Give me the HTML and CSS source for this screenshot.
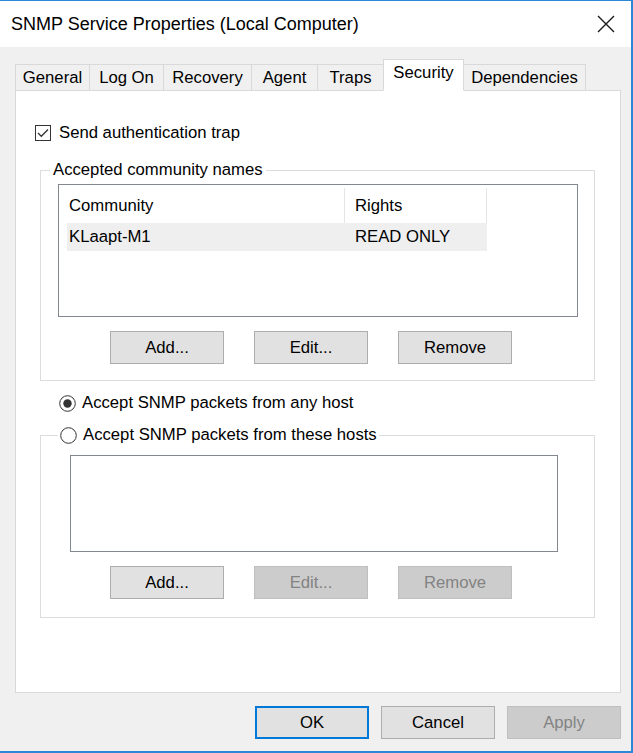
FILE: index.html
```html
<!doctype html>
<html lang="en">
  <head>
    <meta charset="utf-8">
    <title>SNMP Service Properties (Local Computer)</title>
    <link rel="stylesheet" href="styles.css">
  </head>
  <body>
    <div class="window">
      <div class="titlebar">
        <span class="title">SNMP Service Properties (Local Computer)</span>
        <svg class="close" width="18" height="18" viewBox="0 0 18 18">
          <path d="M1 1 L17 17 M17 1 L1 17" stroke="#1a1a1a" stroke-width="1.4" fill="none"/>
        </svg>
      </div>

      <div class="body">
        <div class="tabs">
          <div class="tab">General</div>
          <div class="tab">Log On</div>
          <div class="tab">Recovery</div>
          <div class="tab">Agent</div>
          <div class="tab">Traps</div>
          <div class="tab active">Security</div>
          <div class="tab">Dependencies</div>
        </div>

        <div class="panel">
          <div class="check-row">
            <svg class="checkbox" width="16" height="16" viewBox="0 0 16 16">
              <rect x="0.5" y="0.5" width="15" height="15" fill="#fff" stroke="#333"/>
              <path d="M3 8 L6.3 11.3 L13 4.5" stroke="#333" stroke-width="1.3" fill="none"/>
            </svg>
            <span>Send authentication trap</span>
          </div>

          <fieldset class="group group-community">
            <legend>Accepted community names</legend>
            <div class="listview">
              <div class="lv-head">
                <span class="col-name">Community</span>
                <span class="col-rights">Rights</span>
              </div>
              <div class="lv-row">
                <span class="col-name">KLaapt-M1</span>
                <span class="col-rights">READ ONLY</span>
              </div>
            </div>
            <div class="btn-row">
              <button class="btn">Add...</button>
              <button class="btn">Edit...</button>
              <button class="btn">Remove</button>
            </div>
          </fieldset>

          <div class="radio-row">
            <svg class="radio" width="17" height="17" viewBox="0 0 17 17">
              <circle cx="8.5" cy="8.5" r="7.8" fill="#fff" stroke="#333"/>
              <circle cx="8.5" cy="8.5" r="4.2" fill="#333"/>
            </svg>
            <span>Accept SNMP packets from any host</span>
          </div>

          <fieldset class="group group-hosts">
            <legend>
              <svg class="radio" width="17" height="17" viewBox="0 0 17 17">
                <circle cx="8.5" cy="8.5" r="7.8" fill="#fff" stroke="#333"/>
              </svg>
              <span>Accept SNMP packets from these hosts</span>
            </legend>
            <div class="listbox"></div>
            <div class="btn-row">
              <button class="btn">Add...</button>
              <button class="btn" disabled>Edit...</button>
              <button class="btn" disabled>Remove</button>
            </div>
          </fieldset>
        </div>

        <div class="footer">
          <button class="btn default">OK</button>
          <button class="btn">Cancel</button>
          <button class="btn" disabled>Apply</button>
        </div>
      </div>
    </div>
  </body>
</html>
```

FILE: styles.css
```css
/* base */
body {
    margin: 0;
    font-family: "Liberation Sans", Arial, sans-serif;
    font-size: 16.7px;
    color: #000;
}
/* window frame */
.window {
    box-sizing: border-box;
    width: 633px;
    height: 753px;
    border-top: 1px solid #2b88d8;
    border-right: 2px solid #2b88d8;
    border-bottom: 2px solid #2b88d8;
    background: #f0f0f0;
    display: flex;
    flex-direction: column;
}
.titlebar {
    height: 46px;
    background: #fff;
    display: flex;
    align-items: center;
    padding: 0 16px 0 11px;
}
.title {
    flex: 1;
    font-size: 18px;
}
.close { display: block; }
.body {
    flex: 1;
    padding: 12px 10px 0 15px;
}
/* tabs */
.tabs {
    display: grid;
    grid-template-columns: 74px 74px 88px 66px 66px 80px 122px;
    align-items: end;
    height: 32px;
    margin-bottom: -1px;
    position: relative;
}
.tab {
    box-sizing: border-box;
    height: 27px;
    margin-right: -1px;
    border: 1px solid #d9d9d9;
    background: #f0f0f0;
    display: flex;
    align-items: center;
    justify-content: center;
}
.tab.active {
    height: 32px;
    padding-bottom: 5px;
    background: #fff;
    border-bottom-color: #fff;
    position: relative;
}
.panel {
    box-sizing: border-box;
    height: 603px;
    border: 1px solid #d9d9d9;
    background: #fff;
    padding-top: 32px;
}
/* checkbox / radio rows */
.check-row, .radio-row {
    display: flex;
    align-items: center;
    height: 20px;
    gap: 8px;
}
.check-row { margin-left: 19px; }
.radio-row {
    margin: 12px 0 0 43px;
    gap: 6px;
}
.checkbox, .radio { display: block; flex: none; }
/* group boxes */
.group {
    box-sizing: border-box;
    width: 555px;
    margin: 0 0 0 24px;
    border: 1px solid #dcdcdc;
    min-width: 0;
}
.group legend {
    padding: 0 3px;
    line-height: 20px;
}
.group-community {
    margin-top: 17px;
    padding: 4px 16px 16px 17px;
}
.group-community legend { margin-left: -8px; }
.group-hosts {
    margin-top: 12px;
    padding: 10px 36px 18px 29px;
}
.group-hosts legend {
    margin-left: -12px;
    padding: 0 2px;
    display: flex;
    align-items: center;
    gap: 6px;
}
/* list views */
.listview {
    box-sizing: border-box;
    height: 133px;
    border: 1px solid #828790;
    padding: 3px 0 0 8px;
}
.lv-head, .lv-row {
    display: grid;
    grid-template-columns: 278px 142px;
}
.lv-head {
    height: 35px;
    align-items: center;
}
.lv-head span {
    height: 100%;
    display: flex;
    align-items: center;
    border-right: 1px solid #e5e5e5;
}
.lv-row {
    height: 28px;
    align-items: center;
    background: #efefef;
    width: 420px;
}
.col-name { padding-left: 2px; }
.col-rights { padding-left: 10px; }
.listbox {
    box-sizing: border-box;
    height: 97px;
    border: 1px solid #828790;
}
/* buttons */
.btn-row {
    display: flex;
    gap: 30px;
    margin-top: 14px;
}
.group-community .btn-row { padding-left: 52px; }
.group-hosts .btn-row { padding-left: 40px; }
.btn {
    box-sizing: border-box;
    width: 114px;
    height: 33px;
    border: 1px solid #adadad;
    background: #e1e1e1;
    font-family: inherit;
    font-size: 16.7px;
    color: #000;
    padding: 0;
}
.btn:disabled {
    background: #cccccc;
    border-color: #bfbfbf;
    color: #838383;
}
.btn.default { border: 2px solid #0078d7; }
.footer {
    display: flex;
    justify-content: flex-end;
    gap: 12px;
    margin-top: 13px;
}
```
